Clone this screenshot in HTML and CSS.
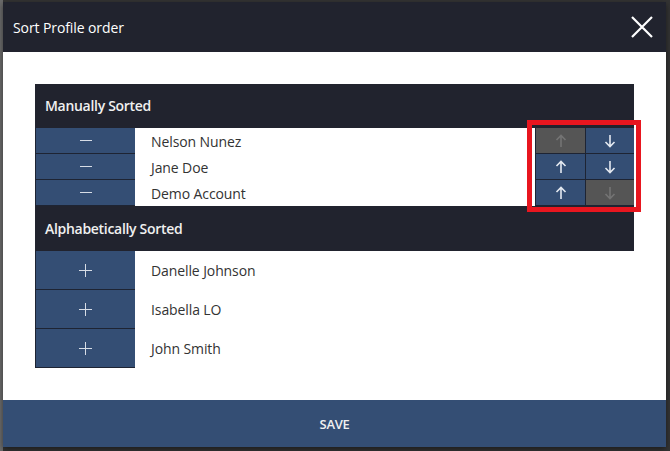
FILE: index.html
```html
<!DOCTYPE html>
<html lang="en">
<head>
    <meta charset="UTF-8">
    <meta name="viewport" content="width=device-width, initial-scale=1.0">
    <title>Sort Profile order</title>
    <link rel="stylesheet" href="styles.css">
</head>
<body>
    <div class="modal">
        <div class="modal-header">
            <span class="modal-title">Sort Profile order</span>
            <button class="close-btn" aria-label="Close">
                <svg width="24" height="24" viewBox="0 0 24 24"><path d="M2 2 L22 22 M22 2 L2 22" stroke="#fff" stroke-width="2.2" fill="none"/></svg>
            </button>
        </div>

        <div class="modal-body">
            <div class="sort-table">
                <div class="section-title">Manually Sorted</div>

                <div class="row manual">
                    <button class="toggle"><span class="minus"></span></button>
                    <div class="name">Nelson Nunez</div>
                    <div class="moves">
                        <button class="move disabled"><svg width="12" height="14" viewBox="0 0 12 14"><path d="M6 13 V1.5 M1.5 6 L6 1.5 L10.5 6" fill="none" stroke-width="1.6"/></svg></button>
                        <button class="move"><svg width="12" height="14" viewBox="0 0 12 14"><path d="M6 1 V12.5 M1.5 8 L6 12.5 L10.5 8" fill="none" stroke-width="1.6"/></svg></button>
                    </div>
                </div>
                <div class="row manual">
                    <button class="toggle"><span class="minus"></span></button>
                    <div class="name">Jane Doe</div>
                    <div class="moves">
                        <button class="move"><svg width="12" height="14" viewBox="0 0 12 14"><path d="M6 13 V1.5 M1.5 6 L6 1.5 L10.5 6" fill="none" stroke-width="1.6"/></svg></button>
                        <button class="move"><svg width="12" height="14" viewBox="0 0 12 14"><path d="M6 1 V12.5 M1.5 8 L6 12.5 L10.5 8" fill="none" stroke-width="1.6"/></svg></button>
                    </div>
                </div>
                <div class="row manual">
                    <button class="toggle"><span class="minus"></span></button>
                    <div class="name">Demo Account</div>
                    <div class="moves">
                        <button class="move"><svg width="12" height="14" viewBox="0 0 12 14"><path d="M6 13 V1.5 M1.5 6 L6 1.5 L10.5 6" fill="none" stroke-width="1.6"/></svg></button>
                        <button class="move disabled"><svg width="12" height="14" viewBox="0 0 12 14"><path d="M6 1 V12.5 M1.5 8 L6 12.5 L10.5 8" fill="none" stroke-width="1.6"/></svg></button>
                    </div>
                </div>

                <div class="section-title alpha-title">Alphabetically Sorted</div>

                <div class="row alpha">
                    <button class="toggle"><span class="plus"></span></button>
                    <div class="name">Danelle Johnson</div>
                </div>
                <div class="row alpha">
                    <button class="toggle"><span class="plus"></span></button>
                    <div class="name">Isabella LO</div>
                </div>
                <div class="row alpha">
                    <button class="toggle"><span class="plus"></span></button>
                    <div class="name">John Smith</div>
                </div>

                <div class="highlight"></div>
            </div>
        </div>

        <button class="save-btn">SAVE</button>
    </div>
</body>
</html>
```

FILE: styles.css
```css
body {
    margin: 0;
    height: 451px;
    overflow: hidden;
    background: linear-gradient(to right, #6b6b6b 3px, #343434 3px);
    font-family: 'Open Sans', sans-serif;
}

.modal {
    width: 663px;
    height: 445px;
    margin: 2px 0 0 3px;
    background-color: #ffffff;
    display: flex;
    flex-direction: column;
    box-shadow: 0 2px 6px rgba(0, 0, 0, 0.5);
}

.modal-header {
    height: 50px;
    flex-shrink: 0;
    background-color: #21232e;
    display: flex;
    align-items: center;
    justify-content: space-between;
    padding: 0 12px 0 10px;
}

.modal-title {
    color: #ffffff;
    font-size: 14px;
    letter-spacing: -0.1px;
}

.close-btn {
    background: none;
    border: none;
    padding: 0;
    width: 24px;
    height: 24px;
    cursor: pointer;
}

.modal-body {
    flex: 1;
    padding: 32px 32px 0 32px;
}

.sort-table {
    position: relative;
    width: 599px;
    background-color: #21232e;
}

.section-title {
    height: 44px;
    line-height: 44px;
    padding-left: 10px;
    color: #f0f0f0;
    font-size: 14px;
    font-weight: 600;
    letter-spacing: -0.3px;
}

.alpha-title {
    margin-top: 1px;
}

.row {
    display: flex;
    background-color: #ffffff;
}

.row.manual {
    height: 26px;
}

.row.alpha {
    height: 39px;
}

.toggle {
    width: 100px;
    flex-shrink: 0;
    box-sizing: border-box;
    border: none;
    border-left: 1px solid #1e2433;
    border-bottom: 1px solid #1e2433;
    background-color: #344e74;
    display: flex;
    align-items: center;
    justify-content: center;
    cursor: pointer;
    padding: 0;
}

.minus {
    display: block;
    width: 12px;
    height: 1px;
    background-color: #d7dde6;
}

.plus {
    position: relative;
    display: block;
    width: 13px;
    height: 13px;
}

.plus::before,
.plus::after {
    content: '';
    position: absolute;
    background-color: #d7dde6;
}

.plus::before {
    left: 0;
    top: 6px;
    width: 13px;
    height: 1px;
}

.plus::after {
    left: 6px;
    top: 0;
    width: 1px;
    height: 13px;
}

.name {
    flex: 1;
    padding-left: 16px;
    display: flex;
    align-items: center;
    color: #333333;
    font-size: 14px;
    letter-spacing: -0.1px;
}

.moves {
    display: flex;
    background-color: #1e2433;
}

.move {
    width: 50px;
    box-sizing: border-box;
    border: none;
    border-left: 1px solid #1e2433;
    border-bottom: 1px solid #1e2433;
    background-color: #344e74;
    stroke: #e4e9f0;
    display: flex;
    align-items: center;
    justify-content: center;
    cursor: pointer;
    padding: 0;
}

.move:last-child {
    width: 49px;
}

.move.disabled {
    background-color: #555555;
    stroke: #747474;
    cursor: default;
}

.highlight {
    position: absolute;
    left: 492px;
    top: 36px;
    width: 114px;
    height: 92px;
    box-sizing: border-box;
    border: 5px solid #e8161f;
    pointer-events: none;
}

.save-btn {
    height: 47px;
    flex-shrink: 0;
    border: none;
    background-color: #344e74;
    color: #f0f0f0;
    font-family: 'Open Sans', sans-serif;
    font-size: 13px;
    font-weight: 600;
    letter-spacing: -0.3px;
    cursor: pointer;
}
```
